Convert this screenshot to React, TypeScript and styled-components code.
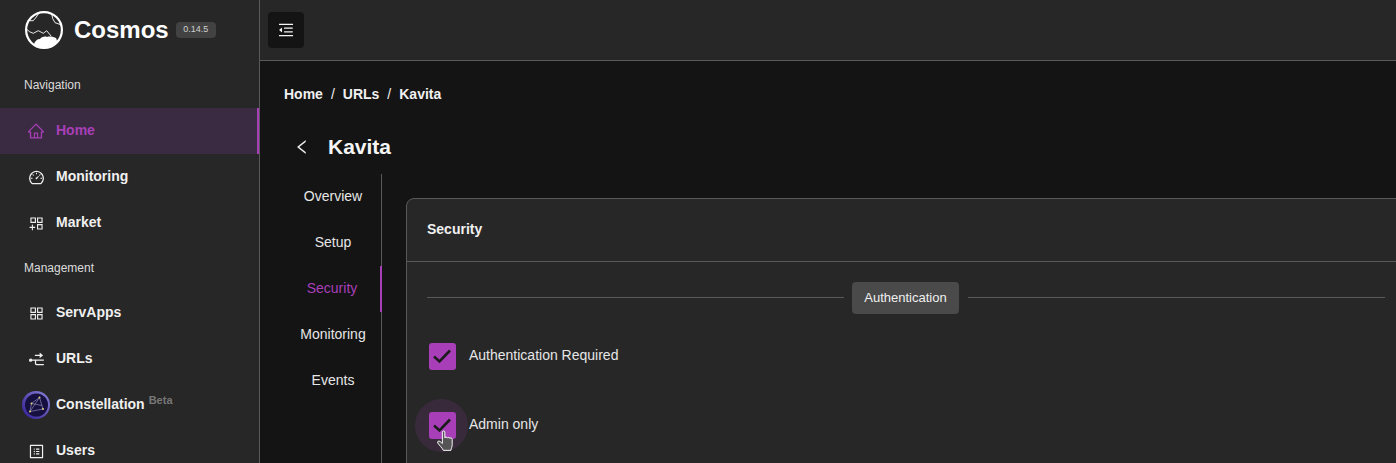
import React from "react";
import styled, { createGlobalStyle } from "styled-components";
import {
  AiOutlineAppstore,
  AiOutlineAppstoreAdd,
  AiOutlineDashboard,
  AiOutlineHome,
  AiOutlineLeft,
  AiOutlineMenuFold,
  AiOutlineNodeExpand,
  AiOutlineProfile,
} from "react-icons/ai";

const accent = "#a83fb9";
const line = "#595959";

const CosmosLogo = () => (
  <svg width="40" height="40" viewBox="0 0 40 40" fill="none">
    <circle cx="20" cy="20" r="17.9" stroke="#fff" strokeWidth="2.2" />
    <path d="M10 34c1-3 3-5 6-5 1-2 5-3 7-2 3-1 7 0 9 1 1 2 1 3 1 4-3 3-8 6-13 6-4 0-7-1-10-4z" fill="#fff" />
    <path d="M2.700 19.300l3 2.500 3.600 1.500 5-2.600 5 2.600 3.400-2.600 4.300 5.300M14.300 4l-2 3-3 3.700-6 0M27.700 4l1 4.500 2.300 4.200 6.700 2.300" stroke="#fff" strokeWidth="0.9" />
  </svg>
);

const ConstellationLogo = () => (
  <svg width="28" height="28" viewBox="0 0 28 28">
    <defs>
      <linearGradient id="ring" x1="1" y1="0" x2="0" y2="1">
        <stop offset="0" stopColor="#8f86da" />
        <stop offset="1" stopColor="#2d1a92" />
      </linearGradient>
    </defs>
    <circle cx="14" cy="14" r="14" fill="url(#ring)" />
    <circle cx="14.500" cy="14" r="11.500" fill="#15103f" />
    <path d="M17.500 6.500L9.500 12.500 8 20.500 21 18 17.500 6.500M9.500 12.500L20 14.500M17.500 6.500L8 20.500" stroke="#8d88b5" strokeWidth="0.7" fill="none" />
    <g fill="#e5d678">
      <circle cx="17.500" cy="6.500" r="1" />
      <circle cx="9.500" cy="12.500" r="1" />
      <circle cx="8" cy="20.500" r="1" />
      <circle cx="21" cy="18" r="1" />
    </g>
  </svg>
);

const HandCursor = () => (
  <svg width="20" height="22" viewBox="0 0 20 23">
    <path
      d="M6.200 2.200c0-1.600 2.600-1.600 2.600 0v6.100c.2-1.300 2.500-1.300 2.600.2.300-1.100 2.500-1.100 2.600.4.500-1 2.500-.7 2.500.8v5.400c0 2.600-1 3.700-1.400 6.200H7.200C6.400 19 2.400 15.500 1.400 13.500c-.8-1.600 1-2.600 2.400-1.500l2.400 2.100V2.200z"
      fill="#555"
      stroke="#fff"
      strokeWidth="1"
      strokeLinejoin="round"
    />
  </svg>
);

const CheckMark = () => (
  <svg width="20" height="16" viewBox="0 0 20 16" fill="none">
    <path d="M2 8.500L7.500 13.500 18 2.500" stroke="#1c1c1c" strokeWidth="2.600" />
  </svg>
);

const App = () => (
  <>
    <GlobalStyle />
    <Shell>
      <Sidebar>
        <Brand>
          <CosmosLogo />
          <BrandName>Cosmos</BrandName>
          <Version>0.14.5</Version>
        </Brand>
        <GroupLabel $top={15} $bottom={13}>Navigation</GroupLabel>
        <NavItem $active>
          <NavIcon><AiOutlineHome size={18} /></NavIcon>
          Home
        </NavItem>
        <NavItem>
          <NavIcon><AiOutlineDashboard size={17} /></NavIcon>
          Monitoring
        </NavItem>
        <NavItem>
          <NavIcon><AiOutlineAppstoreAdd size={17} /></NavIcon>
          Market
        </NavItem>
        <GroupLabel $top={12} $bottom={12}>Management</GroupLabel>
        <NavItem>
          <NavIcon><AiOutlineAppstore size={17} /></NavIcon>
          ServApps
        </NavItem>
        <NavItem>
          <NavIcon><AiOutlineNodeExpand size={18} /></NavIcon>
          URLs
        </NavItem>
        <NavItem>
          <NavIcon><ConstellationLogo /></NavIcon>
          Constellation
          <Beta>Beta</Beta>
        </NavItem>
        <NavItem>
          <NavIcon><AiOutlineProfile size={17} /></NavIcon>
          Users
        </NavItem>
      </Sidebar>
      <Column>
        <TopBar>
          <MenuButton><AiOutlineMenuFold size={18} /></MenuButton>
        </TopBar>
        <Main>
          <Breadcrumbs>
            <span>Home</span><Slash>/</Slash>
            <span>URLs</span><Slash>/</Slash>
            <span>Kavita</span>
          </Breadcrumbs>
          <TitleRow>
            <BackIcon><AiOutlineLeft size={18} /></BackIcon>
            <Title>Kavita</Title>
          </TitleRow>
          <Body>
            <Tabs>
              <Tab>Overview</Tab>
              <Tab>Setup</Tab>
              <Tab $active>Security</Tab>
              <Tab>Monitoring</Tab>
              <Tab>Events</Tab>
            </Tabs>
            <Card>
              <CardHeader>Security</CardHeader>
              <CardBody>
                <DividerRow>
                  <Rule />
                  <Chip>Authentication</Chip>
                  <Rule />
                </DividerRow>
                <CheckRow $top={21}>
                  <CheckSlot>
                    <CheckBox><CheckMark /></CheckBox>
                  </CheckSlot>
                  <CheckLabel>Authentication Required</CheckLabel>
                </CheckRow>
                <CheckRow $top={27}>
                  <CheckSlot>
                    <Hover />
                    <CheckBox><CheckMark /></CheckBox>
                    <Pointer><HandCursor /></Pointer>
                  </CheckSlot>
                  <CheckLabel>Admin only</CheckLabel>
                </CheckRow>
              </CardBody>
            </Card>
          </Body>
        </Main>
      </Column>
    </Shell>
  </>
);

const GlobalStyle = createGlobalStyle`
  html, body {
    margin: 0;
    height: 100%;
    overflow: hidden;
    background: #141414;
  }
  body {
    font-family: "Liberation Sans", Arial, sans-serif;
    font-size: 14px;
    color: #f0f0f0;
  }
`;

const Shell = styled.div`
  display: grid;
  grid-template-columns: 260px minmax(0, 1fr);
  height: 100vh;
  overflow: hidden;
`;

const Sidebar = styled.aside`
  box-sizing: border-box;
  background: #272727;
  border-right: 1px solid ${line};
  overflow: hidden;
`;

const Brand = styled.div`
  display: flex;
  align-items: center;
  height: 60px;
  padding-left: 24px;
`;

const BrandName = styled.div`
  margin-left: 10px;
  font-size: 24px;
  font-weight: 700;
  color: #fff;
`;

const Version = styled.span`
  margin-left: 7px;
  width: 40px;
  height: 16px;
  line-height: 15px;
  border-radius: 4px;
  background: #424242;
  color: #d0d0d0;
  font-size: 9px;
  text-align: center;
`;

const GroupLabel = styled.div<{ $top: number; $bottom: number }>`
  height: 20px;
  line-height: 20px;
  margin: ${(p) => p.$top}px 0 ${(p) => p.$bottom}px 24px;
  font-size: 12px;
  color: #dcdcdc;
`;

const NavItem = styled.div<{ $active?: boolean }>`
  box-sizing: border-box;
  display: flex;
  align-items: center;
  height: 46px;
  padding: 0 0 2px 22px;
  font-weight: 700;
  color: ${(p) => (p.$active ? accent : "#f0f0f0")};
  background: ${(p) => (p.$active ? "#3b2b42" : "transparent")};
  border-right: ${(p) => (p.$active ? `2px solid ${accent}` : "none")};
`;

const NavIcon = styled.span`
  display: flex;
  align-items: center;
  justify-content: center;
  width: 28px;
  height: 28px;
  margin: 2px 6px 0 0;
`;

const Beta = styled.sup`
  align-self: flex-start;
  margin: 10px 0 0 4px;
  font-size: 11px;
  line-height: 16px;
  color: #777;
`;

const Column = styled.div`
  display: flex;
  flex-direction: column;
  min-width: 0;
`;

const TopBar = styled.header`
  box-sizing: border-box;
  flex: none;
  display: flex;
  align-items: center;
  height: 61px;
  padding: 0 8px;
  background: #272727;
  border-bottom: 1px solid ${line};
`;

const MenuButton = styled.div`
  display: flex;
  align-items: center;
  justify-content: center;
  width: 36px;
  height: 36px;
  border-radius: 4px;
  background: #141414;
  color: #f5f5f5;
`;

const Main = styled.main`
  flex: 1;
  min-width: 0;
  padding: 24px 0 0 24px;
`;

const Breadcrumbs = styled.nav`
  display: flex;
  align-items: center;
  height: 18px;
  font-weight: 700;
  color: #f0f0f0;
`;

const Slash = styled.span`
  margin: 0 8px;
  font-weight: 400;
`;

const TitleRow = styled.div`
  display: flex;
  align-items: center;
  height: 40px;
  margin-top: 24px;
`;

const BackIcon = styled.span`
  display: flex;
  justify-content: center;
  width: 36px;
  margin-right: 8px;
`;

const Title = styled.h1`
  margin: 0;
  font-size: 21px;
  font-weight: 700;
  color: #f5f5f5;
`;

const Body = styled.div`
  display: flex;
  align-items: flex-start;
  margin-top: 7px;
`;

const Tabs = styled.div`
  box-sizing: border-box;
  flex: none;
  width: 98px;
  height: 400px;
  border-right: 1px solid ${line};
`;

const Tab = styled.div<{ $active?: boolean }>`
  display: flex;
  align-items: center;
  justify-content: center;
  box-sizing: border-box;
  height: 46px;
  padding-bottom: 2px;
  color: ${(p) => (p.$active ? accent : "#e6e6e6")};
  border-right: ${(p) => (p.$active ? `2px solid ${accent}` : "none")};
  margin-right: -1px;
`;

const Card = styled.section`
  box-sizing: border-box;
  flex: none;
  width: 1000px;
  height: 400px;
  margin: 24px 0 0 24px;
  border: 1px solid ${line};
  border-radius: 8px;
  background: #272727;
`;

const CardHeader = styled.div`
  box-sizing: border-box;
  display: flex;
  align-items: center;
  height: 63px;
  padding: 0 0 2px 20px;
  font-weight: 700;
  border-bottom: 1px solid ${line};
`;

const CardBody = styled.div`
  padding: 20px 20px 0;
`;

const DividerRow = styled.div`
  display: flex;
  align-items: center;
  gap: 8px;
`;

const Rule = styled.div`
  flex: 1;
  height: 1px;
  margin-bottom: 2px;
  background: ${line};
`;

const Chip = styled.div`
  display: flex;
  align-items: center;
  box-sizing: border-box;
  justify-content: center;
  width: 107px;
  height: 32px;
  padding-bottom: 2px;
  margin-right: 1px;
  border-radius: 4px;
  background: #4a4a4a;
  font-size: 13px;
  color: #f0f0f0;
`;

const CheckRow = styled.div<{ $top: number }>`
  display: flex;
  align-items: center;
  height: 42px;
  margin-top: ${(p) => p.$top}px;
  color: #e6e6e6;
`;

const CheckLabel = styled.span`
  margin-bottom: 2px;
`;

const CheckSlot = styled.span`
  position: relative;
  display: flex;
  align-items: center;
  justify-content: center;
  width: 30px;
  height: 30px;
  margin: 0 12px 0 0;
`;

const CheckBox = styled.span`
  position: relative;
  display: flex;
  align-items: center;
  justify-content: center;
  width: 27px;
  height: 27px;
  border-radius: 3px;
  background: ${accent};
`;

const Hover = styled.span`
  position: absolute;
  left: -12px;
  top: -11px;
  width: 53px;
  height: 53px;
  border-radius: 50%;
  background: rgba(168, 63, 185, 0.14);
`;

const Pointer = styled.span`
  position: absolute;
  left: 9px;
  top: 20px;
  display: flex;
`;

export default App;
